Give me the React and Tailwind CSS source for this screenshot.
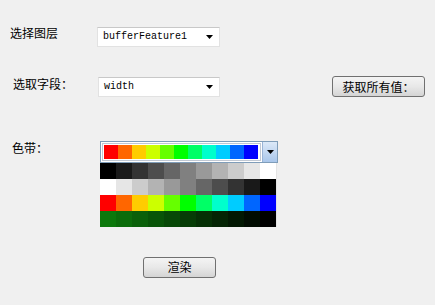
import React from "react";

const cjk = { fontFamily: '"Noto Sans CJK SC", "Noto Sans", sans-serif' };

const band = [
	"#ff0000",
	"#ff6600",
	"#ffcc00",
	"#ccff00",
	"#66ff00",
	"#00ff00",
	"#00ff66",
	"#00ffcc",
	"#00ccff",
	"#0066ff",
	"#0000ff",
];

const grey = (v) => `rgb(${v},${v},${v})`;
const steps = [...Array(11)].map((_, i) => i / 10);

const ramps = [
	steps.map((t) => grey(Math.round(t * 255))),
	steps.map((t) => grey(Math.round((1 - t) * 255))),
	band,
	steps.map(
		(t) =>
			`rgb(${Math.round(12 * (1 - t))},${Math.round(120 * (1 - t))},${Math.round(12 * (1 - t))})`,
	),
];

const Arrow = () => (
	<svg width="7" height="4" viewBox="0 0 7 4">
		<path d="M0 0h7L3.5 4z" fill="#000" />
	</svg>
);

const Combo = ({ value, className }) => (
	<div
		className={`flex items-center justify-between h-[20px] bg-white border border-[#e2e2e2] border-t-[#c8c8c8] pl-[5px] pr-[6px] ${className}`}>
		<span className="font-['Liberation_Mono',monospace] text-[10px] leading-none text-black">
			{value}
		</span>
		<Arrow />
	</div>
);

const Button = ({ children, className }) => (
	<button
		style={cjk}
		className={`h-[21px] border border-[#707070] rounded-[3px] bg-gradient-to-b from-[#f4f4f4] via-[#e8e8e8] to-[#d4d4d4] text-[12px] leading-none text-black ${className}`}>
		{children}
	</button>
);

export default function App() {
	return (
		<div className="w-[435px] h-[305px] bg-[#f0f0f0] overflow-hidden">
			<div className="flex items-start pt-[27px]">
				<div style={cjk} className="w-[97px] pl-[10px] text-[12px] leading-[12px] mt-[0px]">
					选择图层
				</div>
				<Combo value="bufferFeature1" className="w-[123px]" />
			</div>

			<div className="flex items-start mt-[29px]">
				<div style={cjk} className="w-[98px] pl-[13px] text-[12px] leading-[12px] mt-[2px]">
					选取字段：
				</div>
				<Combo value="width" className="w-[122px] mt-[1px]" />
				<Button className="ml-[112px] w-[93px]">获取所有值：</Button>
			</div>

			<div className="flex items-start mt-[44px]">
				<div style={cjk} className="w-[100px] pl-[12px] text-[12px] leading-[12px] mt-[1px]">
					色带：
				</div>
				<div className="flex flex-col w-[178px]">
					<div className="flex h-[22px] border border-[#7f9db9] bg-white">
						<div className="flex-1 p-[1px]">
							<div className="flex h-full border border-[#c0c8d4] p-[1px]">
								{band.map((c) => (
									<div key={c} className="w-[14px] h-full" style={{ backgroundColor: c }} />
								))}
							</div>
						</div>
						<div className="w-[15px] flex items-center justify-center bg-gradient-to-b from-[#dce9f8] to-[#a9c6ea] border-l border-[#9ab4d6]">
							<Arrow />
						</div>
					</div>
					<div className="flex flex-col w-[177px] border-r border-[#e4e4e4] bg-white">
						{ramps.map((row, r) => (
							<div key={r} className="flex h-[16px]">
								{row.map((c, i) => (
									<div key={i} className="flex-1" style={{ backgroundColor: c }} />
								))}
							</div>
						))}
					</div>
				</div>
			</div>

			<div className="pl-[143px] mt-[27px]">
				<Button className="w-[73px]">渲染</Button>
			</div>
		</div>
	);
}
